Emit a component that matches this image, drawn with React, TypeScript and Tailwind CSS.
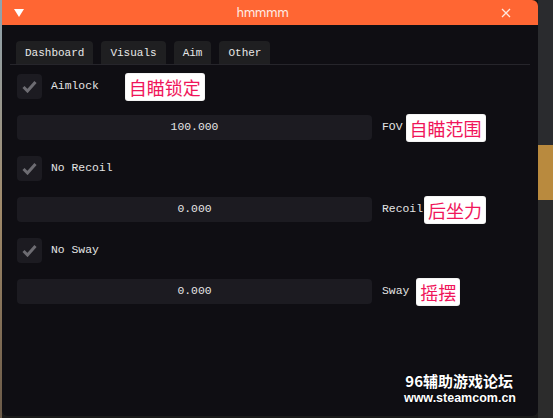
const mono = "font-['Liberation_Mono','DejaVu_Sans_Mono',monospace]";

const rows = [
  { check: "Aimlock", checkNote: "自瞄锁定", value: "100.000", label: "FOV", note: "自瞄范围", gap: "ml-[4px]" },
  { check: "No Recoil", checkNote: "", value: "0.000", label: "Recoil", note: "后坐力", gap: "ml-[2px]" },
  { check: "No Sway", checkNote: "", value: "0.000", label: "Sway", note: "摇摆", gap: "ml-[8px]" },
];

const tabs = ["Dashboard", "Visuals", "Aim", "Other"];

const Note = ({ text }: { text: string }) => (
  <span className="bg-white px-[3px] h-[26px] flex items-center text-[18px] leading-none text-[#f0155a] font-['Noto_Sans_CJK_SC',sans-serif] rounded-[2px] shadow-[0_0_0_1px_#f4f4f4]">
    {text}
  </span>
);

const Check = () => (
  <div className="w-[25px] h-[25px] rounded-[4px] bg-[#1c1b21] flex items-center justify-center">
    <svg width="15" height="13" viewBox="0 0 15 13">
      <path d="M1.5 7 L5.5 11 L13.5 2" stroke="#6d6c72" strokeWidth="3" fill="none" />
    </svg>
  </div>
);

const Row = ({ r }: { r: (typeof rows)[number] }) => (
  <>
    <div className="flex items-center h-[25px]">
      <Check />
      <span className="ml-[9px] text-[#e4e4e4]">{r.check}</span>
      {r.checkNote && (
        <span className="ml-[27px]">
          <Note text={r.checkNote} />
        </span>
      )}
    </div>
    <div className="flex items-center h-[25px] mt-[16px] mb-[16px]">
      <div className="w-[355px] h-[25px] rounded-[4px] bg-[#1c1b21] flex items-center justify-center text-[#e4e4e4]">
        {r.value}
      </div>
      <span className="ml-[10px] text-[#e4e4e4]">{r.label}</span>
      <span className={r.gap}>
        <Note text={r.note} />
      </span>
    </div>
  </>
);

export default function App() {
  return (
    <div className="w-[553px] h-[418px] flex bg-[#1a1a1a] overflow-hidden">
      <div className="w-[2px] h-full bg-gradient-to-b from-[#8fa3b0] via-[#a08a6a] to-[#6b5a48]" />
      <div className={`relative w-[536px] h-[416px] bg-[#0f0e13] rounded-b-[6px] rounded-tr-[6px] flex flex-col text-[11.4px] ${mono}`}>
        <div className="h-[25px] bg-[#ff6633] rounded-tr-[6px] flex items-center px-[12px] text-white">
          <svg width="10" height="8" viewBox="0 0 10 8">
            <path d="M0 0 H10 L5 8 Z" fill="#ffffff" />
          </svg>
          <span className="flex-1 text-center text-[12px] font-['DejaVu_Sans',sans-serif] tracking-[-0.5px] text-[#fdeee8]">hmmmm</span>
          <svg width="10" height="10" viewBox="0 0 10 10" className="mr-[15px]">
            <path d="M1 1 L9 9 M9 1 L1 9" stroke="#ffe9df" strokeWidth="1.3" />
          </svg>
        </div>
        <div className="mx-[8px] mt-[16px] flex gap-[8px] pl-[6px] border-b border-[#26252b] text-[11px]">
          {tabs.map((t) => (
            <div key={t} className="h-[23px] px-[9px] pt-[2px] rounded-t-[4px] bg-[#1f1f21] flex items-center text-[#e8e8e8]">
              {t}
            </div>
          ))}
        </div>
        <div className="pl-[15px] pt-[9px] flex flex-col">
          {rows.map((r) => (
            <Row key={r.check} r={r} />
          ))}
        </div>
        <div className="absolute right-[22px] bottom-[12px] flex flex-col items-end font-['Noto_Sans_CJK_SC',sans-serif] font-bold text-white leading-none [text-shadow:0_0_2px_#000]">
          <span className="text-[15px] mr-[3px]">96辅助游戏论坛</span>
          <span className="text-[12.5px] mt-[4px] font-['Liberation_Sans',sans-serif]">www.steamcom.cn</span>
        </div>
      </div>
      <div className="flex-1 flex flex-col">
        <div className="h-[145px] bg-[#2a2b2e]" />
        <div className="h-[55px] bg-[#b98a3e]" />
        <div className="flex-1 bg-[#2c2c2c]" />
      </div>
    </div>
  );
}
